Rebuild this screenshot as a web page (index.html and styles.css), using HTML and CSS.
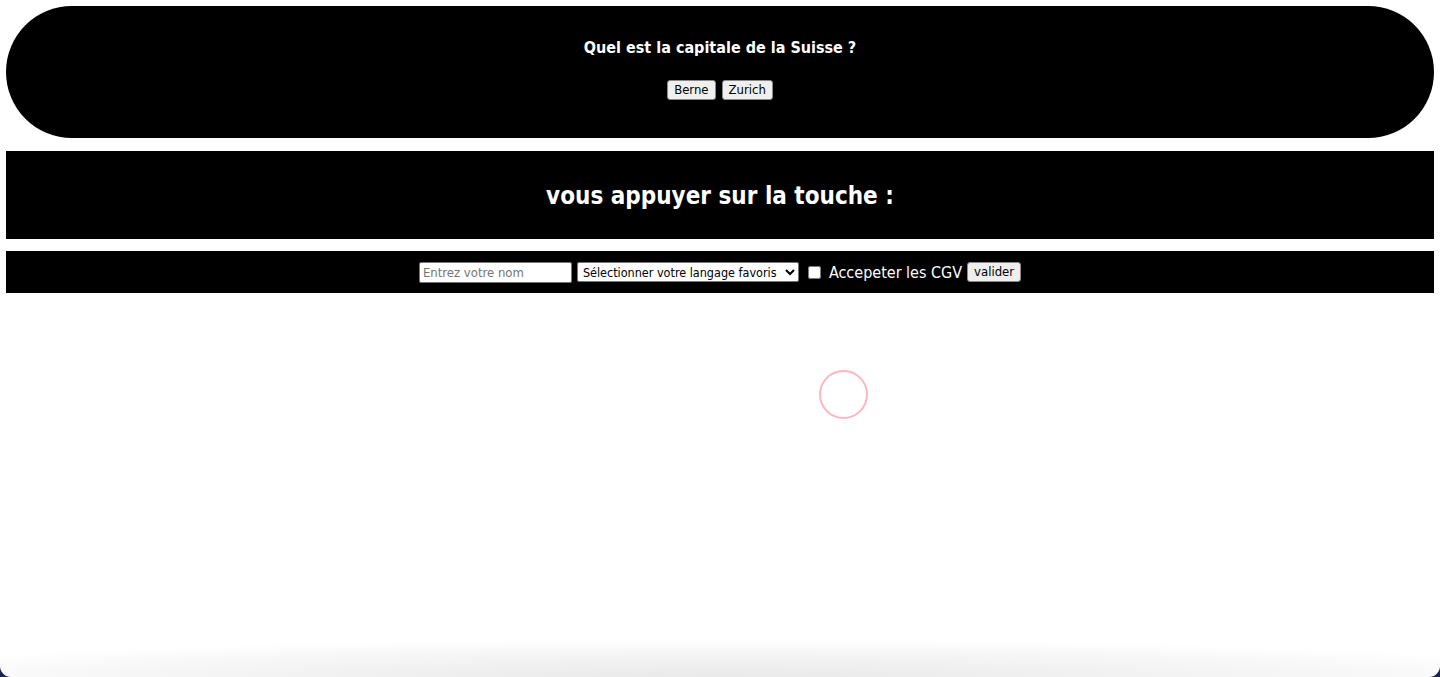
FILE: index.html
```html
<!DOCTYPE html>
<html lang="fr">
<head>
<meta charset="utf-8">
<title>Quiz</title>
<link rel="stylesheet" href="styles.css">
</head>
<body>
<div class="page">
  <section class="quiz">
    <p class="question">Quel est la capitale de la Suisse ?</p>
    <div class="answers">
      <button class="btn">Berne</button>
      <button class="btn">Zurich</button>
    </div>
  </section>
  <section class="keybox">
    <h2 class="keytitle">vous appuyer sur la touche :</h2>
  </section>
  <form class="formbar">
    <input class="field" type="text" placeholder="Entrez votre nom">
    <select class="choice">
      <option>Sélectionner votre langage favoris</option>
    </select>
    <label class="cgv"><input class="check" type="checkbox"> Accepeter les CGV</label>
    <button class="btn" type="button">valider</button>
  </form>
  <div class="stage">
    <div class="ring"></div>
  </div>
</div>
</body>
</html>
```
FILE: styles.css
```css
html {
  background: #1c2550;
  height: 100%;
}
body {
  margin: 0;
  height: 677px;
  background: #fff;
  border-radius: 0 0 11px 11px;
  font-family: "DejaVu Sans Condensed", "DejaVu Sans", sans-serif;
  color: #000;
  position: relative;
  overflow: hidden;
}
body::after {
  content: "";
  position: absolute;
  left: 0;
  right: 0;
  bottom: 0;
  height: 38px;
  background: radial-gradient(ellipse 62% 100% at 50% 100%, rgba(0,0,0,0.09), rgba(0,0,0,0.03) 70%, rgba(0,0,0,0) 100%);
  pointer-events: none;
}
.page {
  padding: 6px;
  display: flex;
  flex-direction: column;
}
.quiz {
  background: #000;
  border-radius: 66px;
  height: 132px;
  box-sizing: border-box;
  padding-top: 31px;
  display: flex;
  flex-direction: column;
  align-items: center;
}
.question {
  margin: 0;
  color: #fff;
  font-weight: bold;
  font-size: 16px;
  line-height: 22px;
}
.answers {
  margin-top: 21px;
  display: flex;
  gap: 6px;
}
.btn {
  font-family: "DejaVu Sans Condensed", "DejaVu Sans", sans-serif;
  font-size: 13px;
  line-height: 16px;
  height: 20px;
  padding: 0 6px;
  background: #efefef;
  border: 1px solid #8a8a8a;
  border-radius: 3px;
  color: #000;
}
.keybox {
  background: #000;
  height: 88px;
  box-sizing: border-box;
  padding-top: 2px;
  display: flex;
  align-items: center;
  justify-content: center;
  margin-top: 13px;
}
.keytitle {
  margin: 0;
  color: #fff;
  font-size: 24px;
  font-weight: bold;
  line-height: 30px;
}
.formbar {
  background: #000;
  height: 42px;
  display: flex;
  align-items: center;
  justify-content: center;
  gap: 5px;
  margin-top: 12px;
}
.field {
  width: 153px;
  height: 21px;
  box-sizing: border-box;
  border: 1px solid #767676;
  border-radius: 2px;
  padding: 1px 3px;
  font-family: "DejaVu Sans Condensed", "DejaVu Sans", sans-serif;
  font-size: 13px;
  background: #fff;
}
.field::placeholder {
  color: #757575;
}
.choice {
  width: 222px;
  height: 20px;
  box-sizing: border-box;
  font-family: "DejaVu Sans Condensed", "DejaVu Sans", sans-serif;
  font-size: 12.5px;
  border: 1px solid #767676;
  border-radius: 2px;
  background: #fff;
  color: #000;
  padding: 0 1px;
}
.cgv {
  color: #fff;
  font-size: 16px;
  display: flex;
  align-items: center;
  gap: 5px;
  margin-left: 4px;
}
.check {
  margin: 0 3px 0 0;
  width: 13px;
  height: 13px;
}
.stage {
  display: flex;
  justify-content: center;
  padding-top: 77px;
  padding-left: 246px;
}
.ring {
  width: 45px;
  height: 45px;
  border: 2px solid #ffb6c1;
  border-radius: 50%;
}
```
